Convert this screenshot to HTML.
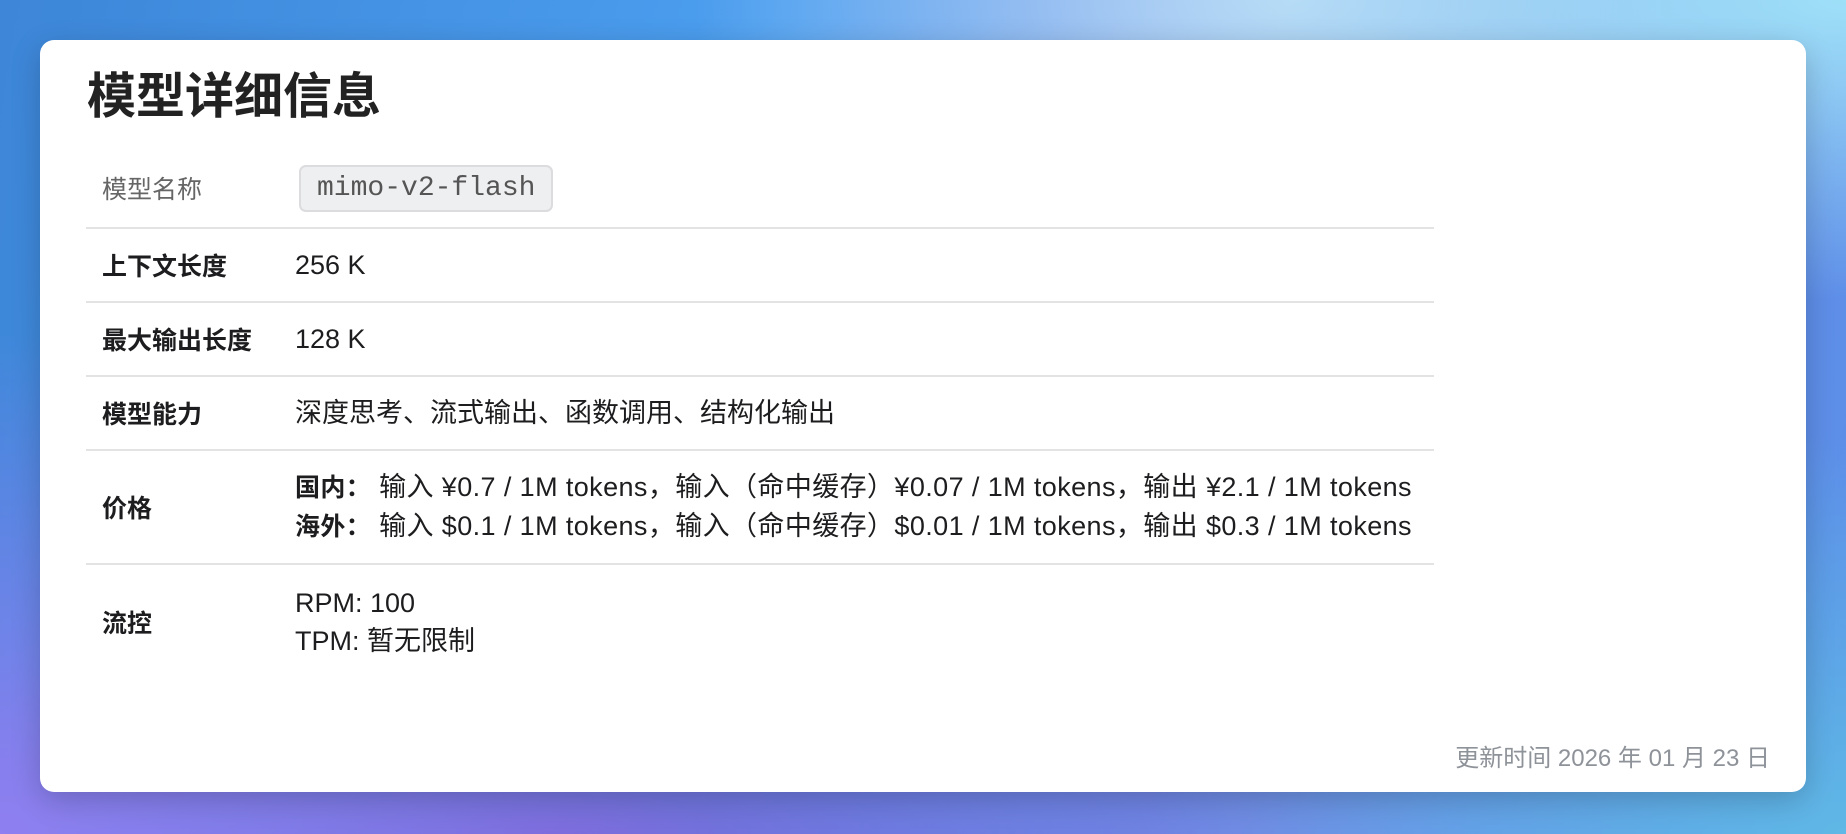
<!DOCTYPE html>
<html><head><meta charset="utf-8"><style>
html,body{margin:0;padding:0;width:1846px;height:834px;overflow:hidden}
body{background:
radial-gradient(ellipse 700px 500px at 0% 100%, #8f7ff0 0%, rgba(143,127,240,0) 100%),
radial-gradient(ellipse 800px 300px at 100% 0%, #9fe0f8 0%, rgba(159,224,248,0) 100%),
radial-gradient(ellipse 600px 300px at 70% 0%, #c0daf5 0%, rgba(192,218,245,0) 100%),
radial-gradient(ellipse 700px 400px at 100% 100%, #5fb8e6 0%, rgba(95,184,230,0) 100%),
radial-gradient(ellipse 900px 200px at 30% 100%, #7a68d8 0%, rgba(122,104,216,0) 100%),
linear-gradient(100deg,#3d86d8 0%,#4c9ff0 40%,#6f8de6 70%,#5a8ee8 100%);
font-family:"Liberation Sans","Noto Sans CJK SC",sans-serif;color:#1d1d1f}
.card{position:absolute;left:40px;top:40px;width:1766px;height:752px;background:#fff;border-radius:14px;box-shadow:0 8px 30px rgba(0,0,0,.2)}
h1{position:absolute;left:47px;top:22px;margin:0;font-size:49px;font-weight:700;line-height:70px;color:#222}
.t{position:absolute;left:46px;top:108px;width:1348px}
.r{display:flex;align-items:center;border-bottom:2px solid #e3e3e3;box-sizing:border-box}
.l{width:209px;flex:none;padding-left:16px;box-sizing:border-box;font-weight:700;font-size:25px}
.v{font-size:27px;line-height:38px}
.v b{font-size:25px}
.p{letter-spacing:0.4px}
code{font-family:"Liberation Mono",monospace;font-size:28px;color:#555;background:#eeeff1;border:2px solid #dcdcdf;border-radius:7px;padding:6px 16px;margin-left:4px}
.f{position:absolute;right:36px;top:698px;font-size:24px;color:#8e9299}
</style></head><body>
<div class="card">
<h1>模型详细信息</h1>
<div class="t">
<div class="r" style="height:81px"><div class="l" style="color:#666;font-weight:400">模型名称</div><div class="v"><code>mimo-v2-flash</code></div></div>
<div class="r" style="height:74px"><div class="l">上下文长度</div><div class="v">256 K</div></div>
<div class="r" style="height:74px"><div class="l">最大输出长度</div><div class="v">128 K</div></div>
<div class="r" style="height:74px"><div class="l">模型能力</div><div class="v">深度思考、流式输出、函数调用、结构化输出</div></div>
<div class="r" style="height:114px"><div class="l">价格</div><div class="v p"><b>国内：</b> 输入 ¥0.7 / 1M tokens，输入（命中缓存）¥0.07 / 1M tokens，输出 ¥2.1 / 1M tokens<br><b>海外：</b> 输入 $0.1 / 1M tokens，输入（命中缓存）$0.01 / 1M tokens，输出 $0.3 / 1M tokens</div></div>
<div class="r" style="height:114px;border:none"><div class="l">流控</div><div class="v">RPM: 100<br>TPM: 暂无限制</div></div>
</div>
<div class="f">更新时间 2026 年 01 月 23 日</div>
</div>
</body></html>
